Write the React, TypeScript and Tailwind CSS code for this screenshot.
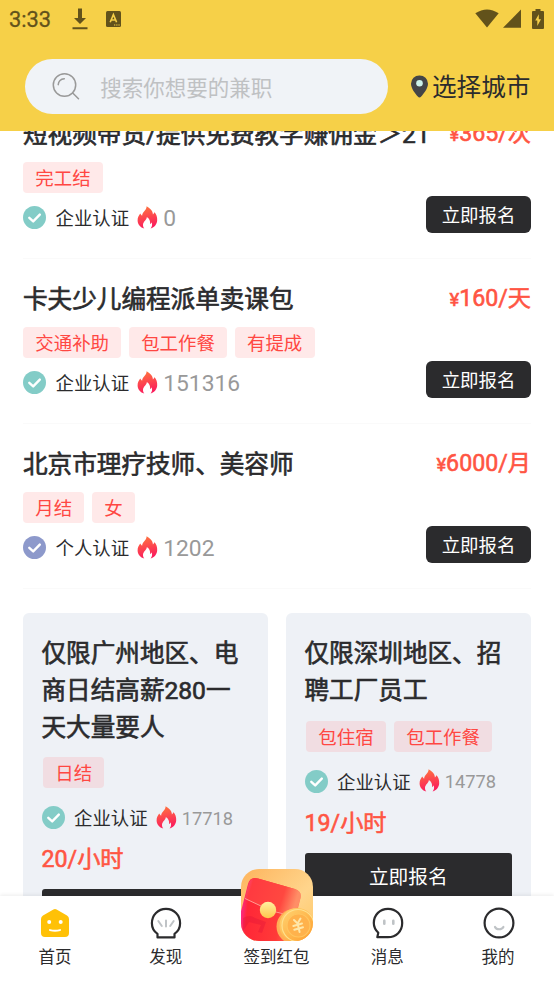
import { ReactNode } from "react";

const Flame = () => (
    <svg className="h-[23px] w-[21px] shrink-0" viewBox="0 0 21 23">
        <defs>
            <linearGradient id="flame" x1="0" y1="0" x2="0.2" y2="1">
                <stop offset="0" stopColor="#ff7a3d" />
                <stop offset="1" stopColor="#fb1e5c" />
            </linearGradient>
        </defs>
        <path
            d="M9.6 0.3C14 2.6 16 6 15.9 8.4C16.9 7.9 17.4 7 17.3 6.1C19.4 8.5 20.4 11.3 20.2 14.2C20 18.3 17.5 21.3 13.6 22.5C15.2 20.5 15.5 18.3 14.6 16.2C14.2 17.2 13.8 17.7 13.1 18C13.4 15 12.4 12.7 9.8 11.1C10.2 13.6 6 15.7 6 19C6 20.5 6.5 21.6 7.3 22.5C3.2 21.4 0.7 18.3 0.6 14.4C0.5 11.6 2 9.5 3.2 7.6C3.8 8.6 4.3 9.3 5.1 9.8C5.5 5.6 9.6 4.6 9.6 0.3Z"
            fill="url(#flame)"
        />
    </svg>
);

const CheckBadge = ({ personal }: { personal?: boolean }) => (
    <svg className="h-[23px] w-[23px] shrink-0" viewBox="0 0 23 23">
        <circle cx="11.5" cy="11.5" r="11.5" fill={personal ? "#8d99cb" : "#83ccc7"} />
        <path
            d="M6.3 11.8L10.2 15.4L16.8 8.6"
            fill="none"
            stroke="#fff"
            strokeWidth="2.4"
            strokeLinecap="round"
            strokeLinejoin="round"
        />
    </svg>
);

const Tag = ({ text, grey }: { text: string; grey?: boolean }) => (
    <span
        className={`h-[31px] rounded px-[12.3px] text-[18.46px] leading-[34px] text-[#ff4742] ${
            grey ? "bg-[#f1dde2]" : "bg-[#ffe9e9]"
        }`}
    >
        {text}
    </span>
);

const Cert = ({ personal, count, small }: any) => (
    <div className="flex h-[31px] items-center">
        <CheckBadge personal={personal} />
        <span className="ml-[9.5px] pt-[3px] text-[18.46px] leading-7 text-[#2b2b2d]">
            {personal ? "个人认证" : "企业认证"}
        </span>
        <div className="ml-2 pb-px">
            <Flame />
        </div>
        <span
            className={`ml-[5px] leading-7 text-[#999] ${
                small ? "pt-[2px] text-[18.3px]" : "pt-[3px] text-[22.8px]"
            }`}
        >
            {count}
        </span>
    </div>
);

const jobs = [
    { title: "短视频带货/提供免费教学赚佣金＞21", price: "365/次", tags: ["完工结"], count: "0" },
    {
        title: "卡夫少儿编程派单卖课包",
        price: "160/天",
        tags: ["交通补助", "包工作餐", "有提成"],
        count: "151316",
    },
    {
        title: "北京市理疗技师、美容师",
        price: "6000/月",
        tags: ["月结", "女"],
        count: "1202",
        personal: true,
    },
];

const cards = [
    {
        lines: ["仅限广州地区、电", "商日结高薪280一", "天大量要人"],
        tags: ["日结"],
        count: "17718",
        price: "20/小时",
    },
    {
        lines: ["仅限深圳地区、招", "聘工厂员工"],
        tags: ["包住宿", "包工作餐"],
        count: "14778",
        price: "19/小时",
    },
];

const JobRow = ({ job }: any) => (
    <div className="h-[165px] shrink-0 border-b border-[#fafafa] pt-[21px]">
        <div className="flex h-[37px] justify-between whitespace-nowrap">
            <h2 className="pt-px text-[24.6px] leading-[37px] text-[#2b2b2d] [-webkit-text-stroke:0.65px_#2b2b2d]">
                {job.title}
            </h2>
            <p className="text-[23.2px] leading-[37px] text-[#ff5543] [-webkit-text-stroke:0.6px_#ff5543]">
                <span className="text-[18.46px]">¥</span>
                {job.price}
            </p>
        </div>
        <div className="mt-[10px] flex gap-[7.5px]">
            {job.tags.map((tag: string) => (
                <Tag key={tag} text={tag} />
            ))}
        </div>
        <div className="mt-[3px] flex h-[37px] justify-between">
            <div className="pt-[6px]">
                <Cert personal={job.personal} count={job.count} />
            </div>
            <button className="w-[105px] rounded-md bg-[#2b2b2d] pt-[4px] text-[18.46px] text-white">
                立即报名
            </button>
        </div>
    </div>
);

const JobCard = ({ card }: any) => (
    <div className="h-[360px] w-[245px] rounded-md bg-[#eef1f6] px-[18.5px] pt-[23px]">
        <h2 className="text-[24.6px] leading-[36.8px] whitespace-nowrap text-[#2b2b2d] [-webkit-text-stroke:0.65px_#2b2b2d]">
            {card.lines.map((line: string) => (
                <span key={line} className="block">
                    {line}
                </span>
            ))}
        </h2>
        <div className="mt-[11px] ml-[1.5px] flex gap-2">
            {card.tags.map((tag: string) => (
                <Tag key={tag} text={tag} grey />
            ))}
        </div>
        <div className="mt-[14px]">
            <Cert count={card.count} small />
        </div>
        <p className="mt-2 text-[23.2px] leading-[37px] text-[#ff5543] [-webkit-text-stroke:0.6px_#ff5543]">
            {card.price}
        </p>
        <div className="mt-[11px] h-[46px] w-[207.5px] rounded-[3px] bg-[#2b2b2d] text-center text-[19.7px] leading-[50px] text-white">
            立即报名
        </div>
    </div>
);

const HomeIcon = () => (
    <svg className="h-8 w-8" viewBox="0 0 32 32">
        <path
            d="M14.4 2.6Q16 1.6 17.6 2.6L28 8.5Q30 9.8 30 12V26Q30 30 26 30H6Q2 30 2 26V12Q2 9.8 4 8.5Z"
            fill="#ffc107"
        />
        <circle cx="10.2" cy="15" r="2" fill="#fff" />
        <circle cx="21.7" cy="15" r="2" fill="#fff" />
        <path d="M11 23.1Q16 24.4 21 23.1" fill="none" stroke="#fff" strokeWidth="2" strokeLinecap="round" />
    </svg>
);

const ShellIcon = () => (
    <svg className="h-8 w-8" viewBox="0 0 32 32" fill="none" strokeLinecap="round">
        <path
            d="M7.5 30.4V26.8C3.8 24.3 1.9 21 1.9 16.2C1.9 8 8 1.8 16 1.8S30.1 8 30.1 16.2C30.1 21 28.2 24.3 24.5 26.8V30.4Z"
            stroke="#2b2b2d"
            strokeWidth="2.2"
            strokeLinejoin="round"
        />
        <path d="M16 13.5V19.5M8.3 14L11.8 19M23.7 14L20.2 19" stroke="#bfc3c6" strokeWidth="2" />
    </svg>
);

const ChatIcon = () => (
    <svg className="h-8 w-8" viewBox="0 0 32 32" fill="none" strokeLinecap="round">
        <path
            d="M16 30.2C24.2 30.2 30.2 24.2 30.2 16S24 1.8 16 1.8S1.8 8 1.8 16C1.8 19.4 3.2 22.8 6.3 25.8L5.3 30.2Z"
            stroke="#2b2b2d"
            strokeWidth="2.2"
            strokeLinejoin="round"
        />
        <path d="M12.3 13.7V16.7M21.3 13.7V16.7" stroke="#bfc3c6" strokeWidth="2.6" />
    </svg>
);

const MeIcon = () => (
    <svg className="h-8 w-8" viewBox="0 0 32 32" fill="none" strokeLinecap="round">
        <circle cx="16" cy="16" r="14.4" stroke="#2b2b2d" strokeWidth="2.2" />
        <path d="M12 20C13.5 23 18.8 23 20.4 20" stroke="#bfc3c6" strokeWidth="2.2" />
    </svg>
);

const RedPacket = () => (
    <svg className="h-[72px] w-[72px]" viewBox="0 0 72 72">
        <defs>
            <clipPath id="tile">
                <rect width="72" height="72" rx="18" />
            </clipPath>
            <linearGradient id="tileBg" x1="0" y1="0" x2="1" y2="1">
                <stop offset="0" stopColor="#fdb45d" />
                <stop offset="0.6" stopColor="#ffd58c" />
                <stop offset="1" stopColor="#ffc765" />
            </linearGradient>
            <linearGradient id="packet" x1="0" y1="0.3" x2="1" y2="0.4">
                <stop offset="0" stopColor="#fb2aa8" />
                <stop offset="0.14" stopColor="#ff2737" />
                <stop offset="0.65" stopColor="#ff3a38" />
                <stop offset="1" stopColor="#ff8158" />
            </linearGradient>
            <linearGradient id="flap" x1="0" y1="0" x2="1" y2="0.2">
                <stop offset="0" stopColor="#fc4b98" />
                <stop offset="0.16" stopColor="#ff3a40" />
                <stop offset="0.75" stopColor="#ff4840" />
                <stop offset="1" stopColor="#ff8e66" />
            </linearGradient>
            <linearGradient id="coin" x1="0" y1="0" x2="1" y2="1">
                <stop offset="0" stopColor="#ffd674" />
                <stop offset="1" stopColor="#ff9c2c" />
            </linearGradient>
            <linearGradient id="knob" x1="0" y1="0" x2="0" y2="1">
                <stop offset="0" stopColor="#fff0a0" />
                <stop offset="1" stopColor="#ffc64c" />
            </linearGradient>
        </defs>
        <g clipPath="url(#tile)">
            <rect width="72" height="72" fill="url(#tileBg)" />
            <path d="M-1 46L7 15Q9 7 17 9.5L54 20Q61 22.5 59.5 29L49 72H-1Z" fill="url(#packet)" />
            <path d="M4 29L7.5 15Q10 7 17 9.5L54 20Q61 22.5 59.5 29L56 41Q50 46 43 44.5L20 37Z" fill="url(#flap)" />
            <path d="M4 29.5L20 37Q31 43 43 45" fill="none" stroke="#ff9c91" strokeWidth="1" />
            <path d="M2 49Q9 45 14 49L25 53L21 64L17 63L20 56L8 53L2 62Z" fill="#e01038" opacity="0.35" />
            <circle cx="27" cy="41" r="8.2" fill="url(#knob)" />
            <circle cx="53" cy="57.5" r="17.5" fill="#ffae55" />
            <circle cx="56" cy="56.5" r="17.5" fill="url(#coin)" />
            <circle cx="57" cy="56.5" r="16" fill="none" stroke="#ffe08d" strokeWidth="1.2" />
            <circle cx="57.5" cy="56.5" r="11.5" fill="#ffb24c" stroke="#ffc660" strokeWidth="1.2" />
            <path
                d="M53 51L56.6 54.5L59.5 49.5M52.3 57L61 54.5M53.3 60.8L62 58.3M56.6 54.5L58.6 63"
                fill="none"
                stroke="#ffe7a8"
                strokeWidth="2"
                strokeLinecap="round"
            />
        </g>
    </svg>
);

const NavItem = ({ label, children }: { label: string; children: ReactNode }) => (
    <div className="flex flex-1 flex-col items-center pt-[11px] text-[16.5px] text-[#2b2b2d]">
        <div className="flex h-8 items-end">{children}</div>
        <span className="mt-[7px] mr-px leading-6">{label}</span>
    </div>
);

const StatusBar = () => (
    <div className="flex h-[37px] items-center justify-between pr-[9px] pl-[9px] text-[#62521b]">
        <div className="flex items-center">
            <span className="pt-[3px] text-[21.8px] [-webkit-text-stroke:0.3px_#62521b]">3:33</span>
            <svg className="ml-[21px] h-[22px] w-4" viewBox="0 0 16 22" fill="currentColor">
                <path d="M6 0.5H10V10H14L8 16L2 10H6ZM0.5 19.3H15.5V21.3H0.5Z" />
            </svg>
            <svg className="ml-[18px] h-4 w-[15px]" viewBox="0 0 15 16">
                <rect width="15" height="16" rx="1.5" fill="currentColor" />
                <path
                    d="M4.2 11.3L7.4 3.6L10.6 11.3M5.3 9H9.5"
                    fill="none"
                    stroke="#f6d048"
                    strokeWidth="1.6"
                />
                <path d="M8 14H9.3M10.2 14H11.5M12.4 14H13.7" stroke="#f6d048" strokeWidth="1.2" />
            </svg>
        </div>
        <div className="flex items-center">
            <svg className="h-[19px] w-6" viewBox="0 0 24 19" fill="currentColor">
                <path d="M0.3 4.3Q12 -3.5 23.7 4.3L12 18.5Z" />
            </svg>
            <svg className="ml-1 h-[19px] w-[18px]" viewBox="0 0 18 19" fill="currentColor">
                <path d="M18 0.6V18.7H0Z" />
            </svg>
            <svg className="mr-px ml-[11px] h-5 w-3" viewBox="0 0 12 20">
                <path d="M3.5 0H8.5V2H11Q12 2 12 3V19Q12 20 11 20H1Q0 20 0 19V3Q0 2 1 2H3.5Z" fill="currentColor" />
                <path d="M6.8 5.2L3.2 11.5H5.3V17L9 10.3H6.8Z" fill="#f6d048" />
            </svg>
        </div>
    </div>
);

const App = () => {
    return (
        <div className="flex h-[984px] w-[554px] flex-col overflow-hidden bg-white font-[Roboto,'Noto_Sans_CJK_SC',sans-serif]">
            <header className="h-[131px] shrink-0 bg-[#f6d048]">
                <StatusBar />
                <div className="mt-[22px] flex h-[55px] items-center pl-[24.5px]">
                    <div className="flex h-full w-[363.5px] items-center rounded-full bg-[#f0f3f7] pl-[27px]">
                        <svg
                            className="h-7 w-7"
                            viewBox="0 0 28 28"
                            fill="none"
                            stroke="#999"
                            strokeWidth="1.5"
                            strokeLinecap="round"
                        >
                            <circle cx="12.5" cy="12" r="11.2" />
                            <path d="M20.7 20L26.5 25.8M6.2 11.7Q6.8 6.3 12.3 5.8" />
                        </svg>
                        <span className="ml-[20.7px] pt-[5px] text-[21.5px] text-[#bfc1c3]">
                            搜索你想要的兼职
                        </span>
                    </div>
                    <svg className="ml-[22.5px] h-[23px] w-[17px]" viewBox="0 0 17 23">
                        <path
                            d="M8.5 0.5A8.3 8.3 0 0 1 17 8.8C17 13.5 12.5 19 10.2 21.6Q8.5 23.4 6.8 21.6C4.5 19 0 13.5 0 8.8A8.3 8.3 0 0 1 8.5 0.5Z"
                            fill="#444547"
                        />
                        <circle cx="8.5" cy="8.3" r="3.3" fill="#cdf3ea" />
                    </svg>
                    <span className="ml-[4.5px] pt-[3px] text-[24.6px] text-[#2b2b2d]">选择城市</span>
                </div>
            </header>

            {/* list is scrolled, so its first row slides under the header */}
            <main className="flex-1 overflow-hidden px-[23px]">
                <div className="-mt-[37px] flex flex-col">
                    {jobs.map((job) => (
                        <JobRow key={job.title} job={job} />
                    ))}
                </div>
                <div className="mt-6 flex justify-between">
                    {cards.map((card) => (
                        <JobCard key={card.price} card={card} />
                    ))}
                </div>
            </main>

            <nav className="relative flex h-[88px] shrink-0 bg-white shadow-[0_-1px_4px_rgba(0,0,0,0.08)]">
                <NavItem label="首页">
                    <HomeIcon />
                </NavItem>
                <NavItem label="发现">
                    <ShellIcon />
                </NavItem>
                <NavItem label="签到红包">
                    <div className="-mb-[2px]">
                        <RedPacket />
                    </div>
                </NavItem>
                <NavItem label="消息">
                    <ChatIcon />
                </NavItem>
                <NavItem label="我的">
                    <MeIcon />
                </NavItem>
            </nav>
        </div>
    );
};

export default App;
